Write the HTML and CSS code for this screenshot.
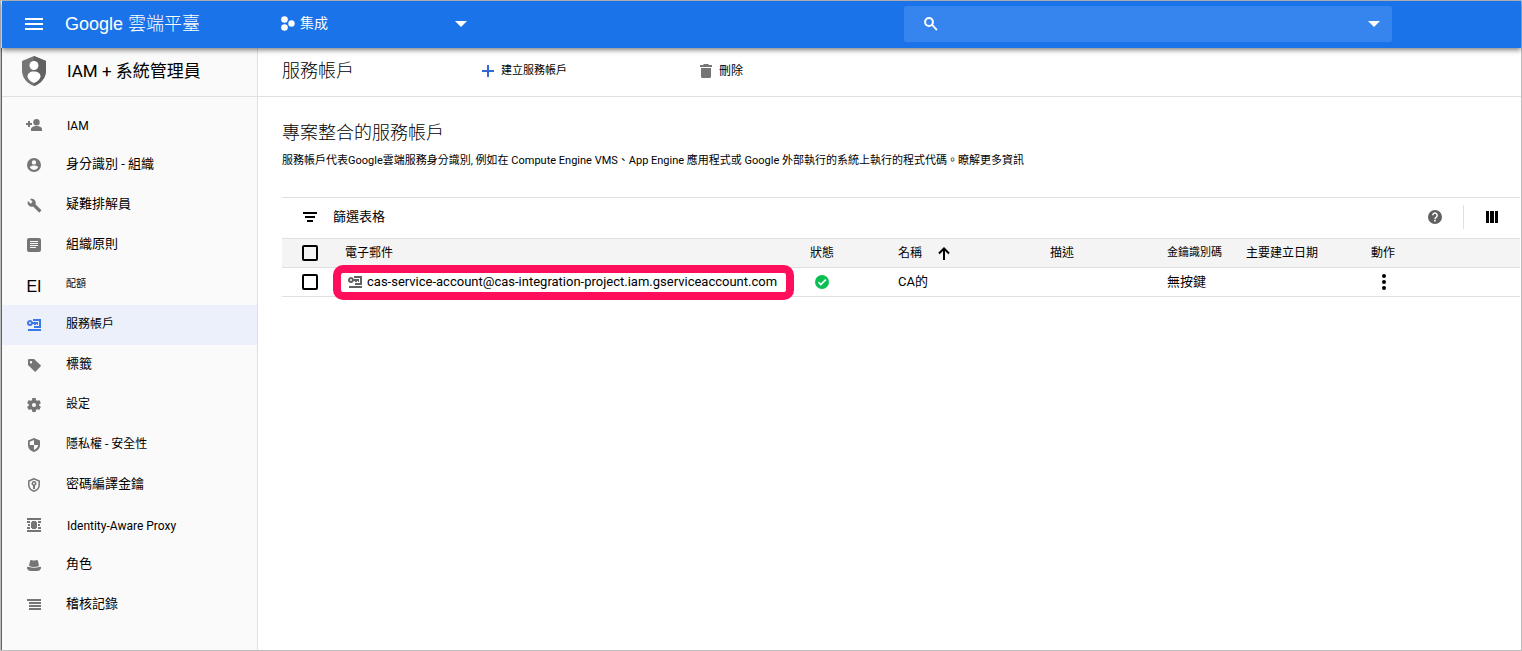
FILE: index.html
```html
<!DOCTYPE html>
<html lang="zh-Hant">
<head>
<meta charset="utf-8">
<meta name="viewport" content="width=device-width, initial-scale=1">
<title>服務帳戶 - IAM + 系統管理員</title>
<link rel="stylesheet" href="styles.css">
</head>
<body>
<svg class="sprite" aria-hidden="true">
  <symbol id="key-card" viewBox="0 0 14 12"><path fill-rule="evenodd" d="M3 1a3 3 0 0 1 2.800 2H11v3h-1V5H9v1H7V5H5.800A3 3 0 1 1 3 1zm0 2a1 1 0 1 0 0 2 1 1 0 0 0 0-2z"/><path d="M6 0h8v9H7V7h5V2H6zM1 10h13v2H1z"/></symbol>
</svg>
<div class="app">
  <header class="topbar">
    <button class="icon-button menu-button" aria-label="選單"><svg width="18" height="12" viewBox="0 0 18 12"><path d="M0 0h18v2H0zM0 5h18v2H0zM0 10h18v2H0z"/></svg></button>
    <span class="brand">Google 雲端平臺</span>
    <button class="project">
      <svg width="14" height="15" viewBox="0 0 14 15"><circle cx="3.500" cy="3.500" r="3.300"/><circle cx="3.500" cy="11.500" r="3.300"/><circle cx="10.500" cy="7.500" r="3.200"/></svg>
      <span class="project-name">集成</span>
      <svg width="12" height="6" viewBox="0 0 12 6"><path d="M0 0h12L6 6z"/></svg>
    </button>
    <div class="search">
      <svg width="14" height="14" viewBox="0 0 14 14"><circle cx="5" cy="5" r="3.900" fill="none" stroke="currentColor" stroke-width="2"/><path d="M7.500 8.500L9 7.500 13.500 12.300 12.300 13.800z"/></svg>
      <input type="search" aria-label="搜尋">
      <button class="icon-button" aria-label="展開搜尋"><svg width="12" height="6" viewBox="0 0 12 6"><path d="M0 0h12L6 6z"/></svg></button>
    </div>
  </header>

  <aside class="sidebar">
    <div class="section-title">
      <svg width="24" height="30" viewBox="0 0 24 30"><path d="M12 0L0 5v9c0 8 5 13.500 12 16 7-2.500 12-8 12-16V5z" fill="#757575"/><path d="M12 0v30c7-2.500 12-8 12-16V5z" fill="#616161"/><circle cx="12" cy="9.500" r="4.500" fill="#fff"/><path d="M12 15.500c-4 0-6.500 2-6.500 5C6 23.500 9 26 12 27c3-1 6-3.500 6.500-6.500 0-3-2.500-5-6.500-5z" fill="#fff"/></svg>
      <span>IAM + 系統管理員</span>
    </div>
    <nav class="nav">
      <a class="nav-item" href="#"><svg width="16" height="12" viewBox="0 0 16 12"><path d="M2 2h2v2h2v2H4v2H2V6H0V4h2z"/><circle cx="10.500" cy="3.200" r="3.200"/><path d="M5 12v-2c0-2 3-3 5.500-3S16 8 16 10v2z"/></svg><span class="roman">IAM</span></a>
      <a class="nav-item" href="#"><svg width="14" height="14" viewBox="0 0 14 14"><path fill-rule="evenodd" d="M7 0a7 7 0 1 1 0 14A7 7 0 0 1 7 0zm0 2.200a2.200 2.200 0 1 0 0 4.400 2.200 2.200 0 0 0 0-4.400zM2.800 9.600a5 5 0 0 0 8.400 0C11.100 8.200 8.400 7.600 7 7.600S2.900 8.200 2.800 9.600z"/></svg><span class="wide">身分識別 - 組織</span></a>
      <a class="nav-item" href="#"><svg width="15" height="15" viewBox="0 0 24 24"><path d="M22.700 19l-9.100-9.100c.9-2.300.4-5-1.500-6.900-2-2-5-2.400-7.400-1.300L9 6 6 9 1.600 4.700C.4 7.100.9 10.100 2.900 12.100c1.900 1.900 4.600 2.400 6.900 1.500l9.100 9.100c.4.4 1 .4 1.400 0l2.300-2.300c.5-.4.5-1.100.1-1.400z"/></svg><span class="wide">疑難排解員</span></a>
      <a class="nav-item" href="#"><svg width="14" height="14" viewBox="0 0 14 14"><path fill-rule="evenodd" d="M2 0h10q2 0 2 2v10q0 2-2 2H2q-2 0-2-2V2Q0 0 2 0zm1 3v1h8V3zm0 2v1h8V5zm0 2v1h8V7zm0 2v1h6V9z"/></svg><span class="wide">組織原則</span></a>
      <a class="nav-item" href="#"><span class="glyph">EI</span><span class="tiny">配額</span></a>
      <a class="nav-item current" href="#" aria-current="page"><svg width="14" height="12"><use href="#key-card"/></svg><span>服務帳戶</span></a>
      <a class="nav-item" href="#"><svg width="14" height="14" viewBox="0 0 14 14"><path fill-rule="evenodd" d="M2 1h5l6.500 6q.8.800 0 1.600L9 13.300q-.8.800-1.600 0L1 7V2q0-1 1-1zm2 2a1.200 1.200 0 1 0 0 2.400A1.200 1.200 0 0 0 4 3z"/></svg><span class="wide">標籤</span></a>
      <a class="nav-item" href="#"><svg width="14" height="14" viewBox="2 2 20 20"><path fill-rule="evenodd" d="M19.430 12.980c.04-.32.07-.64.07-.98s-.03-.66-.07-.98l2.110-1.650c.19-.15.24-.42.12-.64l-2-3.460c-.12-.22-.39-.3-.61-.22l-2.490 1c-.52-.4-1.080-.73-1.690-.98l-.38-2.650C14.460 2.180 14.250 2 14 2h-4c-.25 0-.46.18-.49.42l-.38 2.650c-.61.25-1.170.59-1.690.98l-2.490-1c-.23-.09-.49 0-.61.22l-2 3.460c-.13.22-.07.49.12.64l2.110 1.650c-.04.32-.07.65-.07.98s.03.66.07.98l-2.110 1.650c-.19.15-.24.42-.12.64l2 3.460c.12.22.39.3.61.22l2.490-1c.52.4 1.080.73 1.690.98l.38 2.650c.03.24.24.42.49.42h4c.25 0 .46-.18.49-.42l.38-2.650c.61-.25 1.170-.59 1.690-.98l2.490 1c.23.09.49 0 .61-.22l2-3.460c.12-.22.07-.49-.12-.64zM12 15a3 3 0 1 1 0-6 3 3 0 0 1 0 6z"/></svg><span>設定</span></a>
      <a class="nav-item" href="#"><svg width="12" height="14" viewBox="0 0 12 14"><path fill-rule="evenodd" d="M6 0L0 2.500V7c0 3.500 2.500 6 6 7 3.500-1 6-3.500 6-7V2.500zm0 2v5h4.200c-.4 2.300-1.900 4-4.200 4.900V7H1.800V3.700z"/></svg><span>隱私權 - 安全性</span></a>
      <a class="nav-item" href="#"><svg width="12" height="14" viewBox="0 0 12 14"><path fill="none" stroke="currentColor" stroke-width="1.500" d="M6 .8L.8 3v4c0 3 2.200 5.300 5.200 6.200C9 12.300 11.200 10 11.200 7V3z"/><path fill-rule="evenodd" d="M6 3a2.500 2.500 0 0 1 1 4.800V11H5V7.800A2.500 2.500 0 0 1 6 3zm0 1.600a.9.900 0 1 0 0 1.800.9.900 0 0 0 0-1.800z"/></svg><span class="wide">密碼編譯金鑰</span></a>
      <a class="nav-item" href="#"><svg width="14" height="14" viewBox="0 0 14 14"><path d="M0 0h14v2H0zM0 12h14v2H0zM4 4h6v6H4zM5 3h4v8H5zM0 3h3v2H0zM11 3h3v2h-3zM1 6h2v2H1zM11 6h2v2h-2zM0 9h3v2H0zM11 9h3v2h-3z"/></svg><span class="roman">Identity-Aware Proxy</span></a>
      <a class="nav-item" href="#"><svg width="14" height="12" viewBox="0 0 14 12"><path d="M2 7l1-5Q3.500.500 5 1.200q2 .8 4 0Q10.500.500 11 2l1 5q-5 1.800-10 0zM0 8q1-.5 2 0 5 1.500 10 0 1-.5 2 0v1.500Q13 12 10 12H4Q1 12 0 9.500z"/></svg><span class="wide">角色</span></a>
      <a class="nav-item" href="#"><svg width="14" height="12" viewBox="0 0 14 12"><path d="M0 0h14v2H0zM2 3h12v2H2zM2 6h12v2H2zM2 9h12v2H2z"/></svg><span class="wide">稽核記錄</span></a>
    </nav>
  </aside>

  <main class="main">
    <div class="toolbar">
      <h1>服務帳戶</h1>
      <button class="action create"><svg width="12" height="12" viewBox="0 0 12 12"><path d="M5 0h2v5h5v2H7v5H5V7H0V5h5z"/></svg><span>建立服務帳戶</span></button>
      <button class="action delete"><svg width="12" height="14" viewBox="0 0 12 14"><path d="M3.500 0h5v1H12v2H0V1h3.500zM1 4h10v8.500q0 1.500-1.500 1.500h-7Q1 14 1 12.500z"/></svg><span>刪除</span></button>
    </div>
    <div class="content">
      <h2>專案整合的服務帳戶</h2>
      <p>服務帳戶代表Google雲端服務身分識別, 例如在 Compute Engine VMS、App Engine 應用程式或 Google 外部執行的系統上執行的程式代碼。瞭解更多資訊</p>
      <section class="accounts">
        <div class="filter">
          <button class="filter-button"><svg width="14" height="10" viewBox="0 0 14 10"><path d="M0 0h14v2H0zM2 4h10v2H2zM4 8h6v2H4z"/></svg><span>篩選表格</span></button>
          <button class="icon-button help" aria-label="說明"><svg width="14" height="14" viewBox="0 0 14 14"><circle cx="7" cy="7" r="7"/><path d="M4.800 5.300a2.200 2.200 0 1 1 3.500 1.800Q7 8 7 9.200" fill="none" stroke="#fff" stroke-width="1.500"/><path d="M6.200 10h1.600v1.600H6.200z" fill="#fff"/></svg></button>
          <button class="icon-button columns" aria-label="欄"><svg width="12" height="12" viewBox="0 0 12 12"><path d="M0 0h3v12H0zM4 0h4v12H4zM9 0h3v12H9z"/></svg></button>
        </div>
        <table>
          <colgroup><col class="c-check"><col class="c-email"><col class="c-status"><col class="c-name"><col class="c-desc"><col class="c-key"><col class="c-date"><col></colgroup>
          <thead>
            <tr><th><input type="checkbox" aria-label="全選"></th><th class="email">電子郵件</th><th>狀態</th><th>名稱<svg class="sort" width="12" height="13" viewBox="0 0 12 13"><path d="M6 13V2M1 6.500l5-5 5 5" fill="none" stroke="currentColor" stroke-width="2"/></svg></th><th>描述</th><th class="small">金鑰識別碼</th><th>主要建立日期</th><th>動作</th></tr>
          </thead>
          <tbody>
            <tr><td><input type="checkbox" aria-label="選取帳戶"></td><td class="email highlight"><div class="account"><svg width="14" height="12"><use href="#key-card"/></svg><a href="#">cas-service-account@cas-integration-project.iam.gserviceaccount.com</a></div></td>
            <td><svg class="ok" width="14" height="14" viewBox="0 0 14 14" role="img" aria-label="啟用"><circle cx="7" cy="7" r="7" fill="#0abf53"/><path d="M3.500 7.300l2.300 2.300 5-5" fill="none" stroke="#fff" stroke-width="1.600"/></svg></td><td class="wide">CA的</td><td></td><td class="wide">無按鍵</td><td></td>
            <td><button class="icon-button more" aria-label="更多動作"><svg width="4" height="16" viewBox="0 0 4 16"><circle cx="2" cy="2" r="2"/><circle cx="2" cy="8" r="2"/><circle cx="2" cy="14" r="2"/></svg></button></td></tr>
          </tbody>
        </table>
      </section>
    </div>
  </main>
</div>
</body>
</html>
```

FILE: styles.css
```css
* { box-sizing: border-box; }

body {
  margin: 0;
  font: 12px/20px Roboto, "Noto Sans CJK TC", sans-serif;
  color: #000;
  background: #fff;
}

svg { display: block; flex: none; fill: currentColor; }
.sprite { position: absolute; width: 0; height: 0; }
button, input { font: inherit; color: inherit; }
button { padding: 0; border: 0; background: none; cursor: pointer; }
a { color: inherit; text-decoration: none; }

.app {
  min-height: 100vh;
  display: grid;
  grid-template: auto 1fr / 257px minmax(0, 1fr);
  border: 1px solid #bdbdbd;
}

.topbar {
  grid-column: 1 / -1;
  z-index: 1;
  height: 47px;
  margin-left: 1px;
  padding-bottom: 2px;
  display: flex;
  align-items: center;
  color: #fff;
  background: #1a73e8;
  box-shadow: 0 2px 5px rgba(0, 0, 0, .5);
}
.icon-button { display: flex; align-items: center; justify-content: center; }
.menu-button { margin: 0 22px 0 23px; }
.brand { width: 216px; font: 18px/24px "Liberation Sans", "Noto Sans CJK TC", sans-serif; font-weight: 300; }
.project { width: 186px; display: flex; align-items: center; gap: 5px; }
.project-name { flex: 1; padding-bottom: 2px; text-align: left; font-size: 14px; }
.search {
  width: 488px;
  height: 36px;
  margin: 0 129px 0 auto;
  padding: 0 12px 0 20px;
  display: flex;
  align-items: center;
  gap: 8px;
  border-radius: 2px;
  background: #3684ed;
}
.search input { flex: 1; min-width: 0; border: 0; outline: 0; background: none; }

.sidebar {
  border-left: 1px solid #616161;
  border-right: 1px solid #e0e0e0;
  background: #fafafa;
}
.section-title {
  height: 49px;
  padding: 0 0 2px 20px;
  display: flex;
  align-items: center;
  gap: 21px;
  border-bottom: 1px solid #e0e0e0;
  font-size: 17px;
  line-height: 24px;
}
.nav { padding-top: 8px; }
.nav-item {
  height: 40px;
  display: grid;
  grid-template-columns: 64px 1fr;
  align-items: center;
}
.nav-item svg { justify-self: center; color: #757575; }
.nav-item span { padding-bottom: 2px; }
.wide { font-size: 13px; }
.tiny { font-size: 10px; }
.nav-item .roman { padding: 2px 0 0 1px; }
.nav-item .glyph { justify-self: center; padding: 4px 0 0; font: 16px/20px "Liberation Sans", sans-serif; }
.current { background: #ebf0fa; }
.nav-item.current svg { color: #3b78e7; }

.toolbar {
  height: 49px;
  padding: 0 24px 3px;
  display: flex;
  align-items: center;
  border-bottom: 1px solid #e0e0e0;
}
h1, h2 { margin: 0; font-size: 18px; font-weight: 300; line-height: 24px; }
h1 { width: 200px; }
.action { display: flex; align-items: center; gap: 7px; }
.create { width: 218px; font-size: 11px; }
.create svg { color: #3367d6; }
.delete svg { color: #757575; }

.content { padding: 24px 1px 0 24px; }
.content p { margin: 6px 0 26px; font-size: 11px; line-height: 20px; }
.filter {
  height: 41px;
  padding: 0 22px 2px 21px;
  display: flex;
  align-items: center;
  border-top: 1px solid #e0e0e0;
}
.filter-button { margin-right: auto; display: flex; align-items: center; gap: 16px; font-size: 13px; }
.help { margin-right: 21px; color: #616161; }
.columns { height: 24px; padding-left: 22px; border-left: 1px solid #e0e0e0; }

table { width: 100%; table-layout: fixed; border-collapse: collapse; }
th, td { height: 29px; padding: 0; border: 0 solid #e0e0e0; border-width: 1px 0; text-align: left; font-weight: 400; line-height: 20px; }
th { background: #f4f4f4; }
.c-check { width: 51px; }
.c-email { width: 477px; }
.c-status { width: 88px; }
.c-name { width: 152px; }
.c-desc { width: 117px; }
.c-key { width: 79px; }
.c-date { width: 125px; }
.email { padding-left: 12px; }
.small { font-size: 11px; }
.sort { display: inline-block; margin-left: 16px; vertical-align: -3px; }
.ok { margin-left: 5px; }
.more { width: 26px; }

input[type="checkbox"] {
  appearance: none;
  display: block;
  width: 16px;
  height: 16px;
  margin: 0 0 0 20px;
  border: 2px solid #000;
  border-radius: 2px;
}

.highlight { position: relative; }
.highlight::after {
  content: "";
  position: absolute;
  inset: -3px 16px -4px 0;
  border: 8px solid #ff0f5b;
  border-radius: 10px;
  pointer-events: none;
}
.account { display: flex; align-items: center; gap: 5px; padding-left: 3px; font-size: 13px; }
.account svg { color: #616161; }
```
